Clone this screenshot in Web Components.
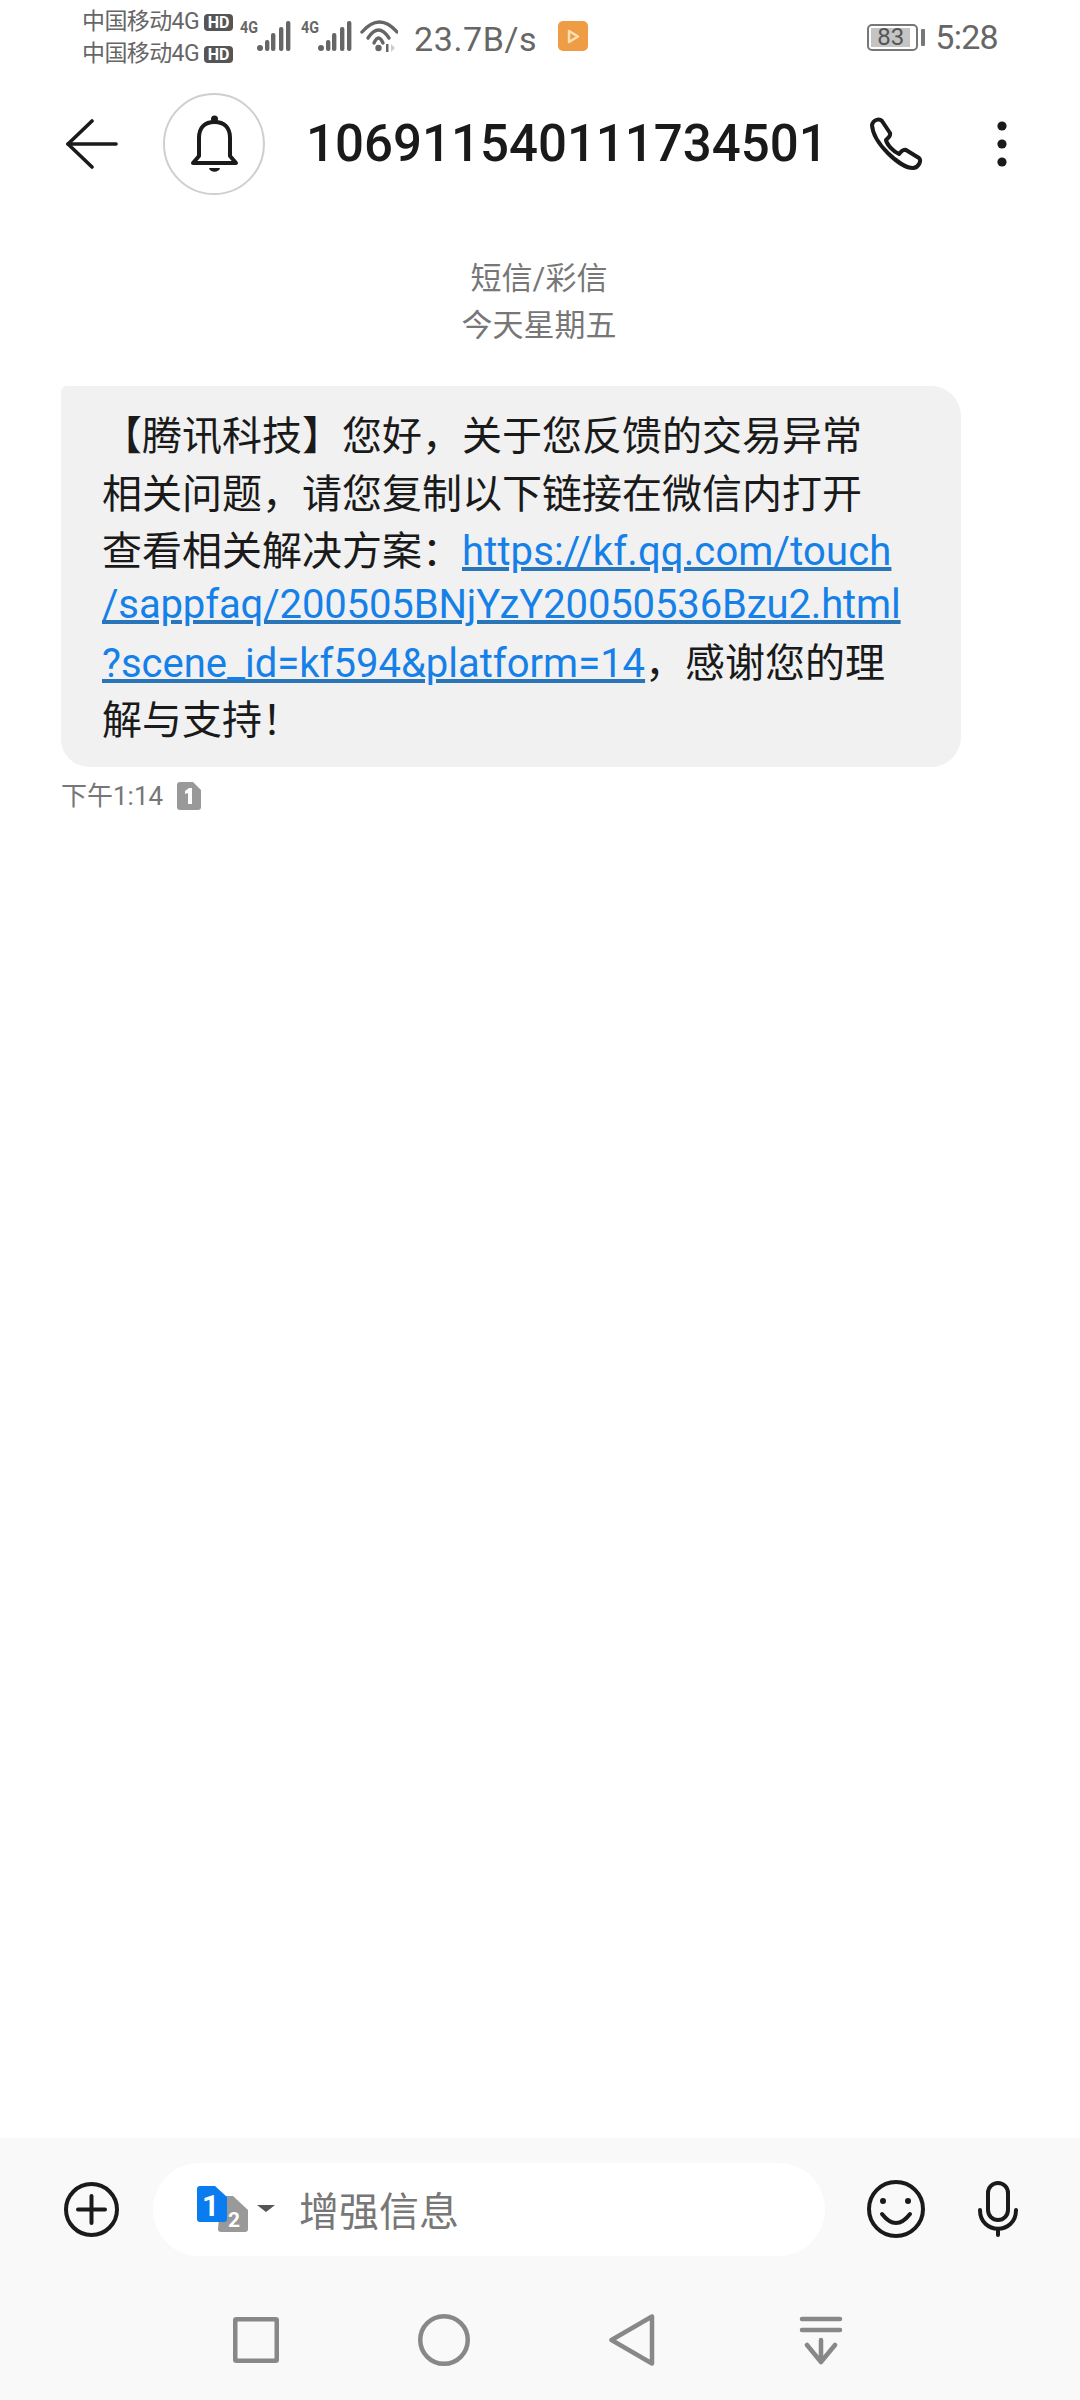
<!DOCTYPE html>
<html>
<head>
<meta charset="utf-8">
<style>
  html, body { margin: 0; padding: 0; background: #fff; }
  body {
    width: 1080px; height: 2400px;
    display: flex; flex-direction: column;
    font-family: Roboto, "Noto Sans CJK SC", sans-serif;
  }
  sms-thread { flex: 1; }
  sms-bubble a { color: #1580e8; text-decoration: underline; text-decoration-color: #2a74b8; }
</style>
</head>
<body>
<status-bar></status-bar>
<sms-header number="106911540111734501"></sms-header>
<sms-thread>
  <sms-date>短信/彩信<br>今天星期五</sms-date>
  <sms-bubble time="下午1:14">
    <div>【腾讯科技】您好，关于您反馈的交易异常</div>
    <div style="margin-top:1px">相关问题，请您复制以下链接在微信内打开</div>
    <div>查看相关解决方案：<a style="letter-spacing:.14px">https://kf.qq.com/touch</a></div>
    <div style="margin-top:-4px"><a style="letter-spacing:-.13px">/sappfaq/200505BNjYzY20050536Bzu2.html</a></div>
    <div style="margin-top:2px"><a>?scene_id=kf594&amp;platform=14</a>，感谢您的理</div>
    <div>解与支持！</div>
  </sms-bubble>
</sms-thread>
<sms-composer></sms-composer>
<nav-bar></nav-bar>

<script>
class StatusBar extends HTMLElement {
  constructor() {
    super();
    let root = this.attachShadow({ mode: 'open' });
    let bars = `<svg class="sig" width="51" height="40" viewBox="0 0 51 40" fill="#666">
      <text x="0" y="21" font-family="Roboto" font-weight="700" font-size="17" textLength="18" lengthAdjust="spacingAndGlyphs" fill="#666">4G</text>
      <circle cx="20" cy="36" r="3"/><rect x="25" y="28" width="4.400" height="11" rx="2"/>
      <rect x="31" y="21" width="4.400" height="18" rx="2"/><rect x="39" y="15" width="4.400" height="24" rx="2"/>
      <rect x="46" y="9" width="4.400" height="30" rx="2"/>
    </svg>`;
    root.innerHTML = `<style>
      :host { display: flex; height: 66px; padding: 6px 0 0 82px; box-sizing: border-box; color: #666; align-items: flex-start; }
      .carriers { width: 158px; flex: none; font-size: 23px; line-height: 32px; color: #666; }
      .carrier { display: flex; align-items: center; white-space: nowrap; letter-spacing: -0.6px; }
      .hd { margin-left: 5px; width: 29px; background: #555; color: #fff; font: 700 16px/17px Roboto; border-radius: 4px; text-align: center; letter-spacing: 0; }
      .sig { flex: none; margin-top: 6px; margin-right: 10px; }
      .wifi { flex: none; margin: 14px 0 0 -2px; }
      .speed { font-size: 34px; line-height: 40px; margin: 13px 0 0 16px; letter-spacing: .6px; color: #666; }
      .app { margin: 15px 0 0 21px; width: 30px; height: 30px; border-radius: 5px; background: #ef9d45; display: flex; align-items: center; justify-content: center; }
      .right { margin-left: auto; padding-right: 82px; display: flex; align-items: center; margin-top: 11px; }
      .batt { width: 51px; height: 27px; border: 2px solid #777; border-radius: 5px; box-sizing: border-box; padding: 2px; margin-right: 3px; }
      .batt span { display: block; width: 39px; height: 19px; background: #c4c4c4; font: 24px/19px Roboto; color: #555; text-align: center; }
      .nub { width: 4px; height: 17px; background: #777; border-radius: 1px; margin-right: 10px; }
      .time { font-size: 34px; line-height: 40px; color: #666; letter-spacing: -.7px; }
    </style>
    <div class="carriers">
      <div class="carrier">中国移动4G<span class="hd">HD</span></div>
      <div class="carrier">中国移动4G<span class="hd">HD</span></div>
    </div>
    ${bars}${bars}
    <svg class="wifi" width="38" height="34" viewBox="0 0 38 34" fill="none" stroke="#666" stroke-width="3.400" stroke-linecap="round">
      <path d="M2 12 Q19.500 -8 37 12"/><path d="M8 18 Q18.500 2 29 18"/><path d="M14 23 Q18.500 13 23 23"/>
      <circle cx="18.500" cy="28" r="3.200" fill="#666" stroke="none"/>
      <rect x="26" y="24" width="2.500" height="8" fill="#666" stroke="none"/>
      <path d="M31 24 L35 28 L31 32 Z" fill="#ccc" stroke="none"/>
    </svg>
    <span class="speed">23.7B/s</span>
    <span class="app"><svg width="15" height="15" viewBox="0 0 15 15" fill="none" stroke="#fde0b8" stroke-width="2.400" stroke-linejoin="round"><path d="M3 2 L12 7.500 L3 13 Z"/></svg></span>
    <div class="right">
      <div class="batt"><span>83</span></div><div class="nub"></div>
      <span class="time">5:28</span>
    </div>`;
  }
}

class SmsHeader extends HTMLElement {
  constructor() {
    super();
    let root = this.attachShadow({ mode: 'open' });
    root.innerHTML = `<style>
      :host { display: flex; align-items: center; height: 156px; box-sizing: border-box; padding: 0 73px 0 66px; }
      .back { flex: none; margin-right: 45px; }
      .avatar { flex: none; width: 102px; height: 102px; border: 2px solid #cfcfcf; border-radius: 50%; box-sizing: border-box; display: flex; align-items: center; justify-content: center; margin-right: 41px; }
      .num { font: 500 51px/60px Roboto; color: #1a1a1a; white-space: nowrap; }
      .call { margin-left: auto; flex: none; }
      .more { margin-left: 74px; flex: none; }
    </style>
    <svg class="back" width="52" height="50" viewBox="0 0 52 50" fill="none" stroke="#1a1a1a" stroke-width="3.600" stroke-linecap="round" stroke-linejoin="round">
      <path d="M26 2 L2 25 L26 48"/><path d="M2 25 H50"/>
    </svg>
    <div class="avatar">
      <svg width="50" height="60" viewBox="0 0 50 60" fill="none" stroke="#1a1a1a" stroke-width="4" stroke-linejoin="round">
        <path d="M10 42 V24 C10 13 16 8 25.500 8 C35 8 41 13 41 24 V42 L47 49 H4 Z"/>
        <circle cx="25.500" cy="5" r="3.500" fill="#1a1a1a" stroke="none"/>
        <path d="M20 54 H31 C30 59 21 59 20 54 Z" fill="#1a1a1a" stroke="none"/>
      </svg>
    </div>
    <span class="num">${this.getAttribute('number')}</span>
    <svg class="call" width="54" height="54" viewBox="0 0 54 54" fill="none" stroke="#1a1a1a" stroke-width="4" stroke-linejoin="round">
      <path d="M3 8 C4 3 10 1 13 4 L21 16 C22 19 19 21 17 23 C18 28 25 35 30 37 C32 35 34 32 37 33 L50 41 C53 44 49 51 44 51 C31 51 4 26 3 8 Z"/>
    </svg>
    <svg class="more" width="10" height="46" viewBox="0 0 10 46" fill="#1a1a1a">
      <circle cx="5" cy="5" r="4.600"/><circle cx="5" cy="23" r="4.600"/><circle cx="5" cy="41" r="4.600"/>
    </svg>`;
  }
}

class SmsThread extends HTMLElement {
  constructor() {
    super();
    let root = this.attachShadow({ mode: 'open' });
    root.innerHTML = `<style>
      :host { display: flex; flex-direction: column; padding: 33px 0 0 61px; box-sizing: border-box; }
    </style><slot></slot>`;
  }
}

class SmsDate extends HTMLElement {
  constructor() {
    super();
    let root = this.attachShadow({ mode: 'open' });
    root.innerHTML = `<style>
      :host { display: block; margin-left: -61px; text-align: center; font-size: 31px; line-height: 47px; color: #777; padding-right: 2px; }
    </style><slot></slot>`;
  }
}

class SmsBubble extends HTMLElement {
  constructor() {
    super();
    let root = this.attachShadow({ mode: 'open' });
    root.innerHTML = `<style>
      :host { display: block; margin-top: 37px; }
      .bubble { width: 900px; height: 381px; box-sizing: border-box; background: #f1f1f1; border-radius: 6px 30px 30px 28px; padding: 22px 0 0 41px; font-size: 40px; line-height: 57px; color: #1a1a1a; white-space: nowrap; }
      .meta { display: flex; align-items: center; margin-top: 11px; font-size: 26px; line-height: 36px; color: #777; }
      .sim { margin-left: 14px; }
    </style>
    <div class="bubble"><slot></slot></div>
    <div class="meta">${this.getAttribute('time')}
      <svg class="sim" width="24" height="28" viewBox="0 0 24 28">
        <path d="M3 0 H16 L24 8 V25 Q24 28 21 28 H3 Q0 28 0 25 V3 Q0 0 3 0 Z" fill="#999"/>
        <path d="M12 6 H15 V22 H11 V11 L8 12 V9 Z" fill="#fff"/>
      </svg>
    </div>`;
  }
}

class SmsComposer extends HTMLElement {
  constructor() {
    super();
    let root = this.attachShadow({ mode: 'open' });
    root.innerHTML = `<style>
      :host { display: flex; align-items: center; height: 142px; background: #f9f9f9; padding: 0 0 0 64px; box-sizing: border-box; }
      .pill { flex: none; width: 672px; height: 93px; margin-left: 34px; background: #fff; border-radius: 47px; display: flex; align-items: center; padding-left: 44px; box-sizing: border-box; font-size: 40px; color: #777; }
      .sims { margin-right: 22px; flex: none; }
      .smile { flex: none; margin-left: 42px; }
      .mic { flex: none; margin-left: 53px; }
    </style>
    <svg width="55" height="55" viewBox="0 0 55 55" fill="none" stroke="#1a1a1a" stroke-width="4" stroke-linecap="round">
      <circle cx="27.500" cy="27.500" r="25.500"/><path d="M14 27.500 H41 M27.500 14 V41"/>
    </svg>
    <div class="pill">
      <svg class="sims" width="80" height="46" viewBox="0 0 80 46">
        <path d="M24 10 H36 L51 24 V43 Q51 46 48 46 H24 Q21 46 21 43 Z" fill="#999"/>
        <path d="M3 0 H18 L30 11 V33 Q30 36 27 36 H3 Q0 36 0 33 V3 Q0 0 3 0 Z" fill="#0a7cf0"/>
        <text x="37" y="41" text-anchor="middle" font-family="Roboto" font-weight="700" font-size="21" fill="#fff">2</text>
        <text x="13.500" y="30" text-anchor="middle" font-family="Roboto" font-weight="700" font-size="30" fill="#fff">1</text>
        <path d="M60 19 H78 L69 26 Z" fill="#555"/>
      </svg>
      增强信息
    </div>
    <svg class="smile" width="58" height="58" viewBox="0 0 58 58" fill="none" stroke="#1a1a1a" stroke-width="4" stroke-linecap="round">
      <circle cx="29" cy="29" r="27"/><path d="M15 34 Q29 52 43 34"/>
      <circle cx="16" cy="21" r="3" fill="#1a1a1a" stroke="none"/><circle cx="41" cy="21" r="3" fill="#1a1a1a" stroke="none"/>
    </svg>
    <svg class="mic" width="40" height="56" viewBox="0 0 40 56" fill="none" stroke="#1a1a1a" stroke-width="4" stroke-linecap="round">
      <rect x="10" y="2" width="20" height="37" rx="10"/><path d="M2 29 C2 54 38 54 38 29"/><path d="M20 48 V54"/>
    </svg>`;
  }
}

class NavBar extends HTMLElement {
  constructor() {
    super();
    let root = this.attachShadow({ mode: 'open' });
    root.innerHTML = `<style>
      :host { display: flex; align-items: center; height: 120px; background: #f9f9f9; padding: 0 0 0 233px; box-sizing: border-box; }
      svg { flex: none; }
      .o { margin-left: 139px; }
      .t { margin-left: 139px; }
      .d { margin-left: 144px; }
    </style>
    <svg width="46" height="46" viewBox="0 0 46 46" fill="none" stroke="#888" stroke-width="4.500" stroke-linejoin="round"><rect x="2.250" y="2.250" width="41.500" height="41.500" rx="1"/></svg>
    <svg class="o" width="52" height="52" viewBox="0 0 52 52" fill="none" stroke="#888" stroke-width="4.500"><circle cx="26" cy="26" r="23.750"/></svg>
    <svg class="t" width="46" height="52" viewBox="0 0 46 52" fill="none" stroke="#888" stroke-width="4.500" stroke-linejoin="round"><path d="M43 2.500 V49.500 L2.500 26 Z"/></svg>
    <svg class="d" width="44" height="50" viewBox="0 0 44 50" fill="none" stroke="#888" stroke-width="4.500" stroke-linecap="round" stroke-linejoin="round"><path d="M3 4 H41 M3 15 H41 M22 25 V46 M8 30 L22 47 L36 30"/></svg>`;
  }
}

customElements.define('status-bar', StatusBar);
customElements.define('sms-header', SmsHeader);
customElements.define('sms-thread', SmsThread);
customElements.define('sms-date', SmsDate);
customElements.define('sms-bubble', SmsBubble);
customElements.define('sms-composer', SmsComposer);
customElements.define('nav-bar', NavBar);
</script>
</body>
</html>
